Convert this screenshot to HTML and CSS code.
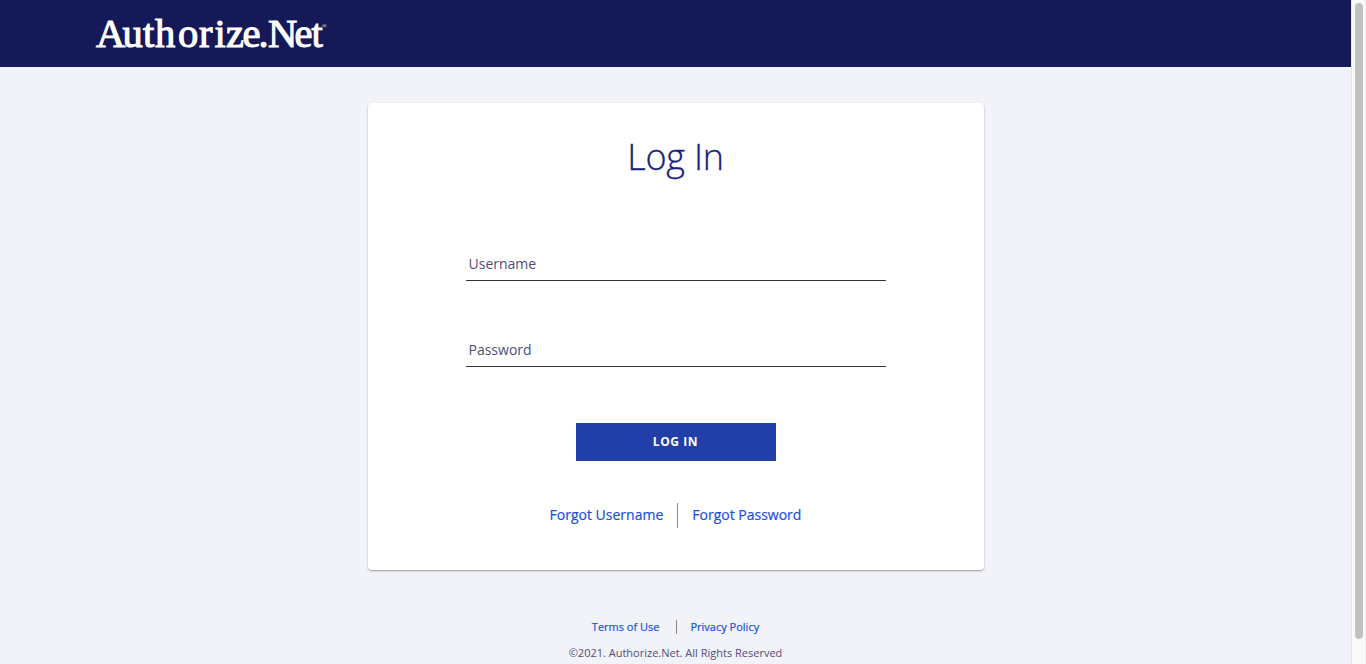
FILE: index.html
```html
<!DOCTYPE html>
<html lang="en">
<head>
    <meta charset="UTF-8">
    <meta name="viewport" content="width=device-width, initial-scale=1.0">
    <title>Log In</title>
    <link rel="stylesheet" href="styles.css">
</head>
<body>
    <div class="page">
        <header class="header">
            <svg class="logo" width="232" height="40" viewBox="0 0 232 40">
                <text class="logo-text" y="33.2" x="0 26.5 47 59 82 103 118.5 130 146.5 162.5 172 198.5 215.5">Authorize.Net</text>
                <text class="logo-mark" x="226" y="14">®</text>
            </svg>
        </header>
        <main class="card">
            <h1 class="title">Log In</h1>
            <form class="form">
                <label class="field">Username</label>
                <label class="field">Password</label>
                <button class="btn" type="button">LOG IN</button>
            </form>
            <div class="links">
                <a class="link forgot-user">Forgot Username</a>
                <a class="link forgot-pass">Forgot Password</a>
            </div>
        </main>
        <footer class="footer">
            <div class="footer-links">
                <a class="link terms">Terms of Use</a>
                <a class="link privacy">Privacy Policy</a>
            </div>
            <p class="copy">©2021. Authorize.Net. All Rights Reserved</p>
        </footer>
    </div>
    <div class="scrollbar"><div class="thumb"></div></div>
</body>
</html>
```
FILE: styles.css
```css
*{box-sizing: border-box;}
body{display: flex; height: 664px; margin: 0; overflow: hidden; background: #f2f3f8; font-family: "Open Sans", sans-serif; color: #504c7a;}
.page{flex: 1; display: flex; flex-direction: column; align-items: center;}

.header{width: 100%; height: 67px; padding: 14px 0 0 96px; background: #151958;}
.logo{display: block; overflow: visible;}
.logo-text{font: 40.5px "Liberation Serif", serif; fill: #fff; stroke: #fff; stroke-width: 1.1px;}
.logo-mark{font: 6px "Liberation Serif", serif; fill: #fff;}

.card{width: 616px; height: 467px; margin-top: 36px; display: flex; flex-direction: column; align-items: center; background: #fff; border-radius: 4px; box-shadow: 0 1px 2px rgba(0,0,0,0.35);}
.title{margin: 29px 0 0; font-size: 36px; line-height: 50px; font-weight: 300; letter-spacing: -0.2px; color: #1a1f7a; -webkit-text-stroke: 0.3px #1a1f7a;}
.form{display: flex; flex-direction: column; align-items: center; margin-top: 61px;}
.field{width: 420px; height: 38px; margin-bottom: 48px; padding: 11px 3px 0; font-size: 14px; line-height: 20px; border-bottom: 1px solid #333;}
.btn{width: 200px; height: 38px; margin-top: 8px; padding: 0; border: 0; background: #223ea9; color: #fff; font: 700 12px/38px "Open Sans", sans-serif; letter-spacing: 0.6px;}
.links{display: flex; margin-top: 42px; font-size: 14px; line-height: 24px;}
.link{color: #1a50e0; -webkit-text-stroke: 0.2px #1a50e0;}
.forgot-user{height: 25px; padding-right: 14px; border-right: 1px solid #888;}
.forgot-pass{padding-left: 14px;}

.footer{display: flex; flex-direction: column; align-items: center; margin-top: 50px; font-size: 11px;}
.footer-links{display: flex; line-height: 14px;}
.terms{padding-right: 17px; border-right: 1px solid #888;}
.privacy{padding-left: 13px;}
.copy{margin: 11px 0 0; line-height: 16px;}

.scrollbar{width: 15px; padding: 3px 2px 0 3px; background: #fafafa; border-left: 1px solid #e6e6e6; border-right: 1px solid #ededed;}
.thumb{width: 8px; height: 636px; border-radius: 4px; background: #c1c1c1;}
```
